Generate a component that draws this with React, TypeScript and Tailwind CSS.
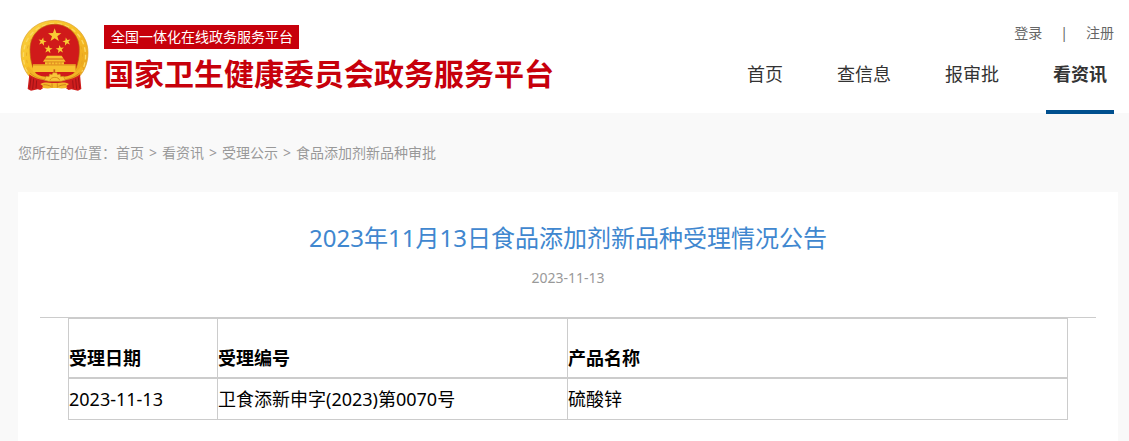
const NAV = [
  { label: '首页', active: false },
  { label: '查信息', active: false },
  { label: '报审批', active: false },
  { label: '看资讯', active: true },
]

const CRUMBS = ['首页', '看资讯', '受理公示', '食品添加剂新品种审批']

const ROWS = [{ date: '2023-11-13', code: '卫食添新申字(2023)第0070号', product: '硫酸锌' }]

function Emblem() {
  return (
    <svg viewBox="28 27 210 222" className="h-[74px] w-[70px] shrink-0" role="img" aria-label="国徽">
      <defs>
        <linearGradient id="gold" x1="0" y1="0" x2="1" y2="1">
          <stop offset="0" stopColor="#fad243" />
          <stop offset="0.5" stopColor="#f7bf25" />
          <stop offset="1" stopColor="#e9a01a" />
        </linearGradient>
        <path
          id="star"
          d="M0-10 2.4-3.2 9.5-3.1 3.8 1.2 5.9 8.1 0 4-5.9 8.1-3.8 1.2-9.5-3.1-2.4-3.2Z"
        />
      </defs>
      {/* wheat wreath */}
      <path
        d="M131 31C76 31 31 73 31 128c0 35 14 65 37 82h126c24-17 38-47 38-82 0-55-46-97-101-97Z"
        fill="url(#gold)"
        stroke="#d9a032"
        strokeWidth="2"
      />
      <path
        d="M50 185C20 130 48 44 131 40c84 4 112 90 82 145"
        fill="none"
        stroke="#fbd863"
        strokeWidth="4"
        strokeDasharray="14 9"
      />
      <path
        d="M57 180C32 130 56 52 131 48c76 4 100 82 75 132"
        fill="none"
        stroke="#e3a022"
        strokeWidth="2"
        strokeDasharray="10 12"
      />
      {/* red field */}
      <path
        d="M132 43c-42 0-74 32-74 75 0 29 6 58 24 82h100c18-24 24-53 24-82 0-43-32-75-74-75Z"
        fill="#d01a1a"
        stroke="#b9600f"
        strokeWidth="2"
      />
      <g fill="#f9cb34">
        <use href="#star" transform="translate(132 76) scale(2.1)" />
        <use href="#star" transform="translate(95 95) rotate(12) scale(1.3)" />
        <use href="#star" transform="translate(168 95) rotate(-12) scale(1.3)" />
        <use href="#star" transform="translate(113 118) rotate(8) scale(1.3)" />
        <use href="#star" transform="translate(148 118) rotate(-8) scale(1.3)" />
      </g>
      {/* gate tower */}
      <g fill="#f8c130">
        <path d="M109 137h44l6 9h-56Z" />
        <path d="M102 148h58l5 7H97Z" />
        <path d="M103 154h57v10h-57Z" />
        <path d="M67 163h128v23H67Z" />
      </g>
      <path d="M105 147h52M102 156h59M67 165h128" stroke="#d07a16" strokeWidth="2" />
      <path d="M112 157v6M122 157v6M132 157v6M142 157v6M151 157v6" stroke="#d8701a" strokeWidth="2" />
      <path d="M131 186v-8" stroke="#c9591a" strokeWidth="5" />
      {/* stalks */}
      <path d="M50 172c14 24 40 36 82 36s67-12 82-36" fill="none" stroke="#f3b426" strokeWidth="9" />
      <path d="M58 189c17 16 42 23 74 23s57-7 74-23" fill="none" stroke="#c97a17" strokeWidth="2" />
      {/* drapery */}
      <path
        d="M56 193c14 13 42 20 76 20s62-7 76-20l4 44-10 5-20-4-8 2-10-7H99l-10 7-8-2-20 4-10-5Z"
        fill="#cf1d1d"
      />
      <path
        d="M61 202l-4 34M69 206l-3 32M78 211l-2 24M203 202l4 34M195 206l3 32M186 211l2 24"
        stroke="#9e1216"
        strokeWidth="3"
      />
      {/* gear */}
      <path
        d="M101 210l6-11 8 1 2-8 7 2 3-6h11l3 6 7-2 2 8 8-1 6 11-13 4h-37Z"
        fill="#f9c63a"
        stroke="#d08a1a"
        strokeWidth="2"
      />
      <path d="M118 211c2-12 27-12 29 0" fill="none" stroke="#d98c1a" strokeWidth="3" />
      {/* ribbon knot */}
      <path
        d="M89 222c12-6 24-4 33-3h20c9-1 21-3 33 3l-8 6 3 5c-11 3-21 3-28 1h-20c-7 2-17 2-28-1l3-5Z"
        fill="#f5b82a"
      />
      <path
        d="M98 224c10 0 16 2 23 5M166 224c-10 0-16 2-23 5M124 220v13M140 220v13"
        fill="none"
        stroke="#bf6a12"
        strokeWidth="2"
      />
    </svg>
  )
}

export default function App() {
  return (
    <div
      lang="zh-CN"
      className="flex min-h-screen flex-col bg-[#f9f9f9] font-['Noto_Sans','Noto_Sans_CJK_SC',sans-serif]"
    >
      <header className="flex h-[113px] justify-between bg-white pl-5 pr-[15px]">
        <div className="flex items-start gap-[14px] pt-[19px]">
          <Emblem />
          <div className="pt-[6px]">
            <div className="flex h-6 w-fit items-center bg-[#c7000b] pl-[7px] pr-[6px] text-sm leading-6 text-white">
              全国一体化在线政务服务平台
            </div>
            <h1 className="mt-1 whitespace-nowrap text-[30px] font-bold leading-[42px] text-[#c7000b]">
              国家卫生健康委员会政务服务平台
            </h1>
          </div>
        </div>

        <div className="flex flex-col items-end">
          <div className="flex gap-[18px] pt-[23px] text-sm leading-5 text-[#666]">
            <a href="#login">登录</a>
            <span>|</span>
            <a href="#register">注册</a>
          </div>
          <nav className="mt-[11px] flex gap-10">
            {NAV.map(({ label, active }) => (
              <a
                key={label}
                href="#nav"
                className={`h-[60px] whitespace-nowrap px-[7px] text-lg leading-10 text-[#333] ${
                  active ? 'border-b-4 border-[#00508f] font-bold' : ''
                }`}
              >
                {label}
              </a>
            ))}
          </nav>
        </div>
      </header>

      <main className="flex flex-1 flex-col pl-[18px] pr-[11px]">
        <div className="flex h-[79px] items-center text-sm leading-5 text-[#999]">
          <span>您所在的位置：</span>
          {CRUMBS.map((crumb, i) => (
            <span key={crumb}>
              {i > 0 && <span className="mx-[5px]">&gt;</span>}
              <a href="#crumb">{crumb}</a>
            </span>
          ))}
        </div>

        <article className="flex-1 bg-white px-[22px] pb-5 pt-7">
          <h2 className="text-center text-2xl leading-9 text-[#4087cf]">2023年11月13日食品添加剂新品种受理情况公告</h2>
          <p className="mt-3 text-center text-sm leading-5 text-[#999]">2023-11-13</p>
          <div className="mt-[29px] border-t border-[#ccc] px-7">
            <table className="w-full table-fixed border-separate border-spacing-0 text-left text-lg leading-6 text-black">
              <thead>
                <tr className="*:h-[61px] *:border-b-2 *:border-r *:border-t *:border-[#ccc] *:pb-[7px] *:align-bottom">
                  <th className="w-[15%] border-l">受理日期</th>
                  <th className="w-[35%]">受理编号</th>
                  <th>产品名称</th>
                </tr>
              </thead>
              <tbody>
                {ROWS.map((row) => (
                  <tr key={row.code} className="*:h-[41px] *:border-b *:border-r *:border-[#ccc]">
                    <td className="border-l">{row.date}</td>
                    <td>{row.code}</td>
                    <td>{row.product}</td>
                  </tr>
                ))}
              </tbody>
            </table>
          </div>
        </article>
      </main>
    </div>
  )
}
